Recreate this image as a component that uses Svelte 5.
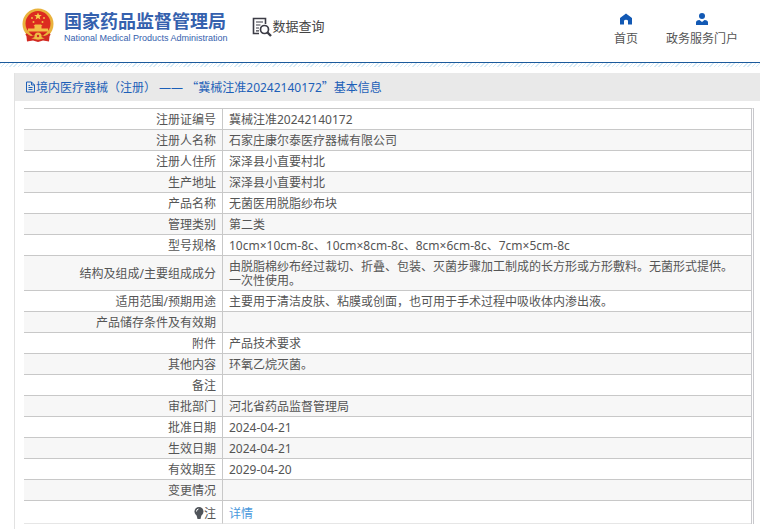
<script lang="ts">
	type Row = { label: string; value: string }

	const regNo = '冀械注准20242140172'

	const rows: Row[] = [
		{ label: '注册证编号', value: regNo },
		{ label: '注册人名称', value: '石家庄康尔泰医疗器械有限公司' },
		{ label: '注册人住所', value: '深泽县小直要村北' },
		{ label: '生产地址', value: '深泽县小直要村北' },
		{ label: '产品名称', value: '无菌医用脱脂纱布块' },
		{ label: '管理类别', value: '第二类' },
		{ label: '型号规格', value: '10cm×10cm-8c、10cm×8cm-8c、8cm×6cm-8c、7cm×5cm-8c' },
		{
			label: '结构及组成/主要组成成分',
			value: '由脱脂棉纱布经过裁切、折叠、包装、灭菌步骤加工制成的长方形或方形敷料。无菌形式提供。一次性使用。'
		},
		{ label: '适用范围/预期用途', value: '主要用于清洁皮肤、粘膜或创面，也可用于手术过程中吸收体内渗出液。' },
		{ label: '产品储存条件及有效期', value: '' },
		{ label: '附件', value: '产品技术要求' },
		{ label: '其他内容', value: '环氧乙烷灭菌。' },
		{ label: '备注', value: '' },
		{ label: '审批部门', value: '河北省药品监督管理局' },
		{ label: '批准日期', value: '2024-04-21' },
		{ label: '生效日期', value: '2024-04-21' },
		{ label: '有效期至', value: '2029-04-20' },
		{ label: '变更情况', value: '' }
	]
</script>

<header>
	<a class="brand" href="#home">
		<svg class="emblem" viewBox="0 0 32 34" aria-hidden="true">
			<path d="M4 24 L5 33.500 L11 32.500 L16 34 L21 32.500 L27 33.500 L28 24 Z" fill="#d22a22" />
			<circle cx="16" cy="16" r="15.500" fill="#e9b23c" />
			<circle cx="16" cy="15.500" r="12.500" fill="#dc2b20" />
			<path d="M16 4.500l1 2.600h2.800l-2.200 1.700.8 2.700-2.400-1.600-2.400 1.600.8-2.700-2.200-1.700H15z" fill="#f7cf4c" />
			<g fill="#f3bd45">
				<circle cx="10" cy="10" r="1" />
				<circle cx="22" cy="10" r="1" />
				<circle cx="11.500" cy="14" r="1" />
				<circle cx="20.500" cy="14" r="1" />
				<path d="M11.500 18l1.500-1.500h6l1.500 1.500zM12.500 18h7v2.500h-7zM6 20.500h20v3H6z" />
			</g>
			<path d="M8 25h16l-3 2.500H11z" fill="#c9231c" />
			<circle cx="16" cy="28" r="3.500" fill="#efbd45" />
			<circle cx="16" cy="28" r="1.200" fill="#d22a22" />
			<path d="M4 26q5 5 8 2M28 26q-5 5-8 2" fill="none" stroke="#d22a22" stroke-width="2" />
		</svg>
		<span class="names">
			<strong>国家药品监督管理局</strong>
			<span class="english">National Medical Products Administration</span>
		</span>
	</a>
	<a class="query" href="#query">
		<svg viewBox="0 0 20 20" aria-hidden="true" fill="none" stroke="#3c3c46">
			<path d="M7 16.500H1.500v-15h12V7" stroke-width="1.600" />
			<path d="M4 5h7M4 8h4.500M4 11h3M4 13.800h3" stroke-width="1.200" />
			<circle cx="12.500" cy="12.500" r="4" stroke-width="1.700" />
			<path d="M15.500 15.500l3.500 3.500" stroke-width="2.400" />
		</svg>
		数据查询
	</a>
	<nav>
		<a href="#index">
			<svg viewBox="0 0 12 12" aria-hidden="true">
				<path d="M6 .5L12 5v6.500H8V8q0-1.200-2-1.200T4 8v3.500H0V5z" fill="#1259b4" />
			</svg>
			首页
		</a>
		<a href="#portal">
			<svg viewBox="0 0 12 12" aria-hidden="true">
				<circle cx="6" cy="3" r="3" fill="#1259b4" />
				<path d="M0 12V9.500Q0 7 3.500 7L6 9l2.500-2Q12 7 12 9.500V12z" fill="#1259b4" />
			</svg>
			政务服务门户
		</a>
	</nav>
</header>
<div class="dots"></div>

<main>
	<h1>
		<svg viewBox="0 0 11 12" aria-hidden="true" fill="none" stroke="#1c5fb8">
			<path d="M1.500 1h5l3 3v7h-8zM6.500 1v3h3M3.500 6.500h4M3.500 8.500h4M3.500 4.500h1.500" />
		</svg>
		<span>境内医疗器械（注册） —— <span class="quote">“</span>{regNo}<span class="quote">”</span>基本信息</span>
	</h1>
	<table>
		<tbody>
			{#each rows as row}
				<tr>
					<th scope="row">{row.label}</th>
					<td>{row.value}</td>
				</tr>
			{/each}
			<tr class="note">
				<th scope="row">
					<svg viewBox="0 0 10 12" aria-hidden="true">
						<circle cx="5" cy="4.500" r="4.500" fill="#50545a" />
						<path d="M2.500 8h5L6.500 12h-3z" fill="#50545a" />
						<path d="M2.500 4.500Q2.500 2.300 4.500 2" fill="none" stroke="#fff" />
					</svg>注
				</th>
				<td><a href="#detail">详情</a></td>
			</tr>
		</tbody>
	</table>
</main>

<style>
	:global(body) {
		margin: 0;
		background: #fff;
		color: #555;
		font: 12px/14px 'Noto Sans', 'Noto Sans CJK SC', sans-serif;
	}

	a {
		color: inherit;
		text-decoration: none;
	}

	header {
		display: flex;
		align-items: center;
		height: 62px;
		padding: 0 22px;
		border-bottom: 1px solid #1b5a9c;
	}

	.brand {
		display: flex;
		align-items: center;
		gap: 10px;
		padding-bottom: 12px;
	}

	.emblem {
		width: 32px;
		height: 34px;
	}

	.names {
		display: flex;
		flex-direction: column;
		padding-top: 4px;
		color: #3561ae;
		white-space: nowrap;
	}

	.names strong {
		font-size: 18px;
		line-height: 22px;
	}

	.english {
		font: 9px/12px 'Liberation Sans', sans-serif;
	}

	.query {
		display: flex;
		align-items: center;
		gap: 1px;
		margin-left: 24px;
		padding-bottom: 10px;
		color: #444;
		font-size: 13px;
		line-height: 20px;
		white-space: nowrap;
	}

	.query svg {
		width: 20px;
		height: 20px;
		padding-top: 2px;
	}

	nav {
		display: flex;
		gap: 28px;
		margin-left: auto;
		padding-bottom: 3px;
	}

	nav a {
		display: flex;
		flex-direction: column;
		align-items: center;
		gap: 7px;
		white-space: nowrap;
	}

	nav svg {
		width: 12px;
		height: 12px;
	}

	.dots {
		height: 4px;
		background: repeating-linear-gradient(135deg, #d6eaf6 0 1px, #fff 1px 3px);
	}

	main {
		margin: 6px 0 0 14px;
		padding-bottom: 5px;
		border-left: 1px solid #e2e2e2;
	}

	h1 {
		display: flex;
		align-items: center;
		height: 28px;
		margin: 0;
		padding-left: 10px;
		background: #e9e9e9;
		color: #1c5fb8;
		font-size: 12px;
		font-weight: 400;
		line-height: 16px;
	}

	h1 svg {
		width: 11px;
		height: 12px;
	}

	.quote {
		font-family: 'Noto Sans CJK SC', sans-serif;
	}

	table {
		width: calc(100% - 15px);
		margin: 7px 6px 0 9px;
		border-top: 1px solid #c8c8c8;
		border-right: 3px double #c8c8cc;
		border-spacing: 0;
		table-layout: fixed;
	}

	th,
	td {
		padding: 4px 6px 2px;
		height: 14px;
		border-bottom: 1px solid #c8c8c8;
		font-weight: 400;
	}

	th {
		width: 186px;
		border-right: 1px solid #c8c8c8;
		text-align: right;
	}

	td {
		padding-right: 12px;
		text-align: left;
	}

	tr:nth-child(even) {
		background: #f7f7f7;
	}

	.note th,
	.note td {
		padding-top: 6px;
		border-bottom-color: #e6e6e6;
	}

	.note svg {
		width: 10px;
		height: 12px;
		vertical-align: -1px;
	}

	.note a {
		color: #4a98dc;
	}
</style>
